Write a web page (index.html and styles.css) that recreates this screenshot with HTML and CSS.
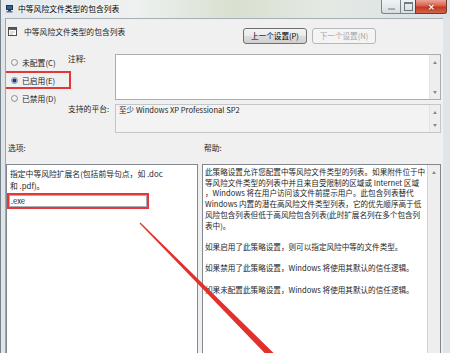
FILE: index.html
```html
<!DOCTYPE html>
<html lang="zh-CN">
<head>
<meta charset="utf-8">
<title>中等风险文件类型的包含列表</title>
<link rel="stylesheet" href="styles.css">
</head>
<body>
<div class="window">
  <div class="titlebar">
    <svg class="app-icon" width="7" height="8" viewBox="0 0 7 8">
      <rect x="0.5" y="0.5" width="6" height="4" fill="#3b5f8f" stroke="#1f3556" stroke-width="1"/>
      <rect x="2" y="5" width="3" height="1" fill="#2a3f5e"/>
      <rect x="0.5" y="6" width="6" height="1.5" fill="#5a6d84"/>
    </svg>
    <span class="title">中等风险文件类型的包含列表</span>
    <div class="controls">
      <span class="ctl min"></span>
      <span class="ctl max"></span>
      <span class="ctl close">✕</span>
    </div>
  </div>
  <div class="client">
    <div class="header">
      <svg class="policy-icon" width="9" height="9" viewBox="0 0 9 9">
        <rect x="0.5" y="0.5" width="8" height="8" fill="#ffffff" stroke="#4d4d4d" stroke-width="1"/>
        <rect x="1" y="1" width="7" height="2" fill="#5c5c5c"/>
        <rect x="2" y="4.5" width="5" height="1" fill="#b9b9b9"/>
        <rect x="2" y="6.5" width="3" height="1" fill="#b9b9b9"/>
      </svg>
      <span class="policy-name">中等风险文件类型的包含列表</span>
      <div class="nav">
        <button class="btn">上一个设置(P)</button>
        <button class="btn disabled">下一个设置(N)</button>
      </div>
    </div>

    <div class="settings">
      <div class="radios">
        <div class="radio"><span class="dot"></span>未配置(C)</div>
        <div class="radio checked marked"><span class="dot"></span>已启用(E)</div>
        <div class="radio"><span class="dot"></span>已禁用(D)</div>
      </div>
      <div class="flabel l1">注释:</div>
      <div class="box comment">
        <div class="vscroll"><span class="up"></span><span class="down"></span></div>
      </div>
      <div class="flabel l2">支持的平台:</div>
      <div class="box platform">
        <span class="ptext">至少 Windows XP Professional SP2</span>
        <div class="vscroll"><span class="up"></span><span class="down"></span></div>
      </div>
    </div>

    <div class="section-labels"><span>选项:</span><span>帮助:</span></div>

    <div class="panels">
      <div class="panel options">
        <div class="opt-text">指定中等风险扩展名(包括前导句点，如 .doc<br>和 .pdf)。</div>
        <div class="opt-input">.exe</div>
      </div>
      <div class="panel help">
        <div class="help-text">
          <p>此策略设置允许您配置中等风险文件类型的列表。如果附件位于中<br>等风险文件类型的列表中并且来自受限制的区域或 Internet 区域<br>，Windows 将在用户访问该文件前提示用户。此包含列表替代<br>Windows 内置的潜在高风险文件类型列表，它的优先顺序高于低<br>风险包含列表但低于高风险包含列表(此时扩展名列在多个包含列<br>表中)。</p>
          <p>如果启用了此策略设置，则可以指定风险中等的文件类型。</p>
          <p>如果禁用了此策略设置，Windows 将使用其默认的信任逻辑。</p>
          <p>如果未配置此策略设置，Windows 将使用其默认的信任逻辑。</p>
        </div>
        <div class="vscroll"><span class="up"></span></div>
      </div>
    </div>
  </div>
  <svg class="arrow" width="450" height="353" viewBox="0 0 450 353">
    <polygon points="140.4,222.6 274.8,354.2 270.2,358.8 139.6,223.4" fill="#e2302c"/>
  </svg>
</div>
</body>
</html>
```

FILE: styles.css
```css
* { box-sizing: border-box; }
html, body { margin: 0; padding: 0; }
body {
  width: 450px;
  height: 353px;
  overflow: hidden;
  font-family: "Noto Sans CJK SC", "Noto Sans", sans-serif;
  font-size: 7.8px;
  color: #1e1e1e;
  background: #dde3e7;
}
.window {
  position: relative;
  width: 450px;
  height: 353px;
  display: flex;
  flex-direction: column;
  border-left: 1px solid #77828a;
  background: linear-gradient(90deg, #dfe5e8 0%, #e4e9e6 50%, #dfe5e9 100%);
}
.titlebar {
  height: 18px;
  flex: none;
  display: flex;
  align-items: flex-start;
  padding-left: 5px;
  background: linear-gradient(90deg, #e3e9ec 0%, #eef1f0 30%, #d8e0d0 52%, #e4e9e3 72%, #dbe2e7 100%);
}
.app-icon { margin-top: 5px; flex: none; }
.title {
  margin-left: 5px;
  margin-top: 4px;
  line-height: 10px;
  color: #000;
  text-shadow: 0 0 3px #ffffff, 0 0 5px #ffffff;
  white-space: nowrap;
}
.controls {
  margin-left: auto;
  margin-right: 3px;
  display: flex;
  height: 14px;
}
.ctl {
  height: 14px;
  border: 1px solid #7b858c;
  border-top: none;
  display: flex;
  align-items: center;
  justify-content: center;
  position: relative;
}
.min {
  width: 19px;
  border-right: none;
  border-bottom-left-radius: 3px;
  background: linear-gradient(#f1f4f6, #d6dde2);
}
.min::before {
  content: "";
  width: 7px;
  height: 2px;
  margin-top: 5px;
  background: #3c4a55;
  opacity: 0.35;
}
.max {
  width: 15px;
  border-right: none;
  background: linear-gradient(#f1f4f6, #d6dde2);
}
.max::before {
  content: "";
  width: 7px;
  height: 6px;
  border: 1px solid #3c4a55;
  border-top-width: 2px;
  opacity: 0.7;
}
.close {
  width: 32px;
  border-color: #6e3a33;
  border-bottom-right-radius: 3px;
  background: linear-gradient(#eaa597 0%, #d8604c 45%, #c5381f 55%, #d0644a 100%);
  color: #ffffff;
  font-size: 8px;
  font-weight: bold;
  line-height: 14px;
  text-shadow: 0 0 2px #5a1a10;
}

.client {
  flex: 1;
  min-height: 0;
  margin: 0 7px 0 4px;
  border-left: 1px solid #9ea6ab;
  border-top: 1px solid #a6afb4;
  background: #f0f0f0;
  padding-right: 2px;
  display: flex;
  flex-direction: column;
  overflow: hidden;
}
.header {
  height: 34px;
  flex: none;
  display: flex;
  align-items: flex-start;
  padding-top: 8px;
}
.policy-icon { margin-left: 2px; flex: none; }
.policy-name {
  margin-left: 7px;
  line-height: 10px;
  white-space: nowrap;
}
.nav {
  margin-left: auto;
  margin-right: 65px;
  margin-top: 1px;
  display: flex;
  gap: 5px;
}
.btn {
  width: 64px;
  height: 16px;
  padding: 0;
  font-family: inherit;
  font-size: 7.6px;
  line-height: 14px;
  color: #000;
  border: 1px solid #707070;
  border-radius: 3px;
  background: linear-gradient(#f3f3f3 0%, #ebebeb 48%, #dddddd 52%, #cfcfcf 100%);
  white-space: nowrap;
}
.btn.disabled {
  color: #a6a6a6;
  border-color: #b5b9bc;
  background: #f4f4f4;
}

.settings {
  flex: none;
  display: grid;
  grid-template-columns: 62px 47px 1fr;
  grid-template-rows: 47px 29px;
  row-gap: 4px;
}
.radios {
  grid-column: 1;
  grid-row: 1 / span 2;
  display: flex;
  flex-direction: column;
}
.radio {
  position: relative;
  height: 18px;
  display: flex;
  align-items: center;
  gap: 4px;
  padding-left: 5px;
  white-space: nowrap;
}
.dot {
  width: 7px;
  height: 7px;
  flex: none;
  border-radius: 50%;
  border: 1px solid #8e8f8f;
  background: radial-gradient(circle at 40% 35%, #ffffff, #d8d8d8);
}
.checked .dot {
  background: radial-gradient(circle, #1d3a66 0, #1d3a66 1.4px, #7f9cc4 2px, #eef2f7 3px);
}
.marked::after {
  content: "";
  position: absolute;
  left: -4px;
  right: -3px;
  top: 0;
  bottom: 0;
  border: 2px solid #e2383a;
}
.flabel {
  grid-column: 2;
  line-height: 12px;
  white-space: nowrap;
}
.l1 { grid-row: 1; }
.l2 { grid-row: 2; line-height: 9px; }
.box {
  grid-column: 3;
  position: relative;
  display: flex;
  border: 1px solid #abadb3;
  background: #ffffff;
}
.comment { grid-row: 1; margin-top: 1px; }
.platform { grid-row: 2; background: #f3f3f3; border-color: #c4c6cb; }
.ptext {
  flex: 1;
  padding: 0 3px;
  line-height: 9px;
  font-size: 7.6px;
  white-space: nowrap;
}
.vscroll {
  width: 11px;
  flex: none;
  margin-left: auto;
  align-self: stretch;
  display: flex;
  flex-direction: column;
  justify-content: space-between;
  align-items: center;
  padding: 6px 0 5px;
  background: #eeeeee;
  border-left: 1px solid #e2e2e2;
}
.up, .down {
  width: 0;
  height: 0;
  border-left: 2.5px solid transparent;
  border-right: 2.5px solid transparent;
}
.up { border-bottom: 3px solid #8a8a8a; }
.down { border-top: 3px solid #8a8a8a; }

.section-labels {
  flex: none;
  display: grid;
  grid-template-columns: 192px 1fr;
  column-gap: 4px;
  margin-top: 9px;
  line-height: 12px;
}
.section-labels span { padding-left: 2px; }

.panels {
  flex: 1;
  min-height: 0;
  margin-top: 10px;
  display: grid;
  grid-template-columns: 192px 1fr;
  column-gap: 4px;
}
.panel {
  background: #ffffff;
  border: 1px solid #828790;
  border-bottom: none;
}
.options { padding: 3px 3px 0; }
.opt-text { line-height: 12px; white-space: nowrap; }
.opt-input {
  margin: 3px 0 0 -1px;
  width: 138px;
  height: 12px;
  border: 1px solid #abadb3;
  outline: 2px solid #e2383a;
  font-size: 7.6px;
  line-height: 10px;
  padding: 0 1px;
}
.help { display: flex; }
.help-text {
  flex: 1;
  padding: 2px 0 0 2px;
  font-size: 7.6px;
  line-height: 10.7px;
  white-space: nowrap;
  overflow: hidden;
}
.help-text p { margin: 0 0 10.7px; }
.help .vscroll {
  width: 13px;
  justify-content: flex-start;
  padding-top: 6px;
  border-left: 1px solid #d4d4d4;
}

.arrow {
  position: absolute;
  left: -1px;
  top: 0;
  pointer-events: none;
}
```
